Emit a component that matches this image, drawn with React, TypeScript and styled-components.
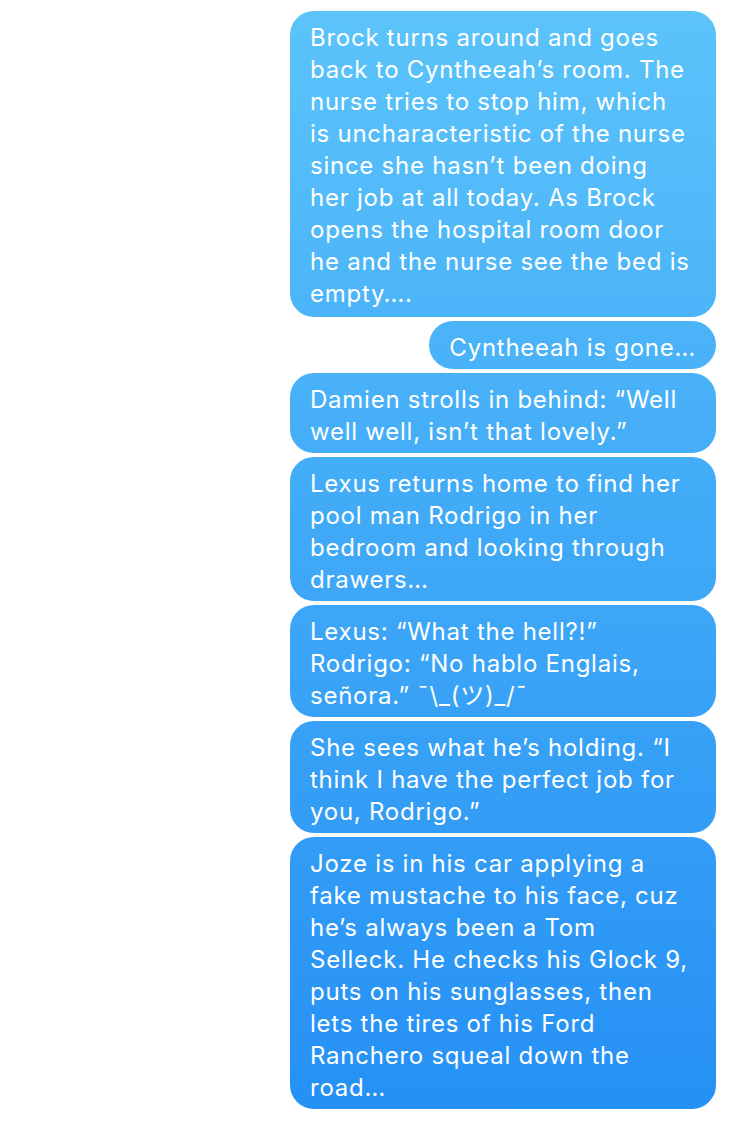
import React from "react";
import styled, { createGlobalStyle } from "styled-components";

const Global = createGlobalStyle`
  html, body { margin: 0; padding: 0; background: #ffffff; }
  body { font-family: Inter, "Noto Sans", sans-serif; -webkit-font-smoothing: antialiased; }
`;

const Thread = styled.div`
  width: 748px;
  min-height: 1121px;
  box-sizing: border-box;
  padding: 11px 32px 12px 0;
  display: flex;
  flex-direction: column;
  align-items: flex-end;
  gap: 4px;
`;

const Bubble = styled.div<{ $fit?: boolean }>`
  box-sizing: border-box;
  width: ${(p) => (p.$fit ? "auto" : "426px")};
  padding: 11px 20px 5px;
  border-radius: 24px;
  color: #ffffff;
  font-family: Inter, "Noto Sans", "Noto Sans CJK JP", sans-serif;
  font-size: 24px;
  line-height: 32px;
  letter-spacing: 0.75px;
  white-space: pre-line;
  background-image: linear-gradient(180deg, #5cc4fa 0px, #3fa8f7 560px, #2590f5 1121px);
  background-attachment: fixed;
  background-size: 748px 1121px;

  &:first-child {
    padding-bottom: 7px;
  }
`;

const messages: { text: string; fit?: boolean }[] = [
  {
    text:
      "Brock turns around and goes\nback to Cyntheeah\u2019s room. The\nnurse tries to stop him, which\nis uncharacteristic of the nurse\nsince she hasn\u2019t been doing\nher job at all today. As Brock\nopens the hospital room door\nhe and the nurse see the bed is\nempty\u2026.",
  },
  { text: "Cyntheeah is gone\u2026", fit: true },
  { text: "Damien strolls in behind: \u201CWell\nwell well, isn\u2019t that lovely.\u201D" },
  {
    text:
      "Lexus returns home to find her\npool man Rodrigo in her\nbedroom and looking through\ndrawers\u2026",
  },
  {
    text:
      "Lexus: \u201CWhat the hell?!\u201D\nRodrigo: \u201CNo hablo Englais,\nse\u00F1ora.\u201D \u00AF\\_(\u30C4)_/\u00AF",
  },
  {
    text:
      "She sees what he\u2019s holding. \u201CI\nthink I have the perfect job for\nyou, Rodrigo.\u201D",
  },
  {
    text:
      "Joze is in his car applying a\nfake mustache to his face, cuz\nhe\u2019s always been a Tom\nSelleck. He checks his Glock 9,\nputs on his sunglasses, then\nlets the tires of his Ford\nRanchero squeal down the\nroad\u2026",
  },
];

export default function App() {
  return (
    <>
      <Global />
      <Thread>
        {messages.map((m, i) => (
          <Bubble key={i} $fit={m.fit}>
            {m.text}
          </Bubble>
        ))}
      </Thread>
    </>
  );
}
